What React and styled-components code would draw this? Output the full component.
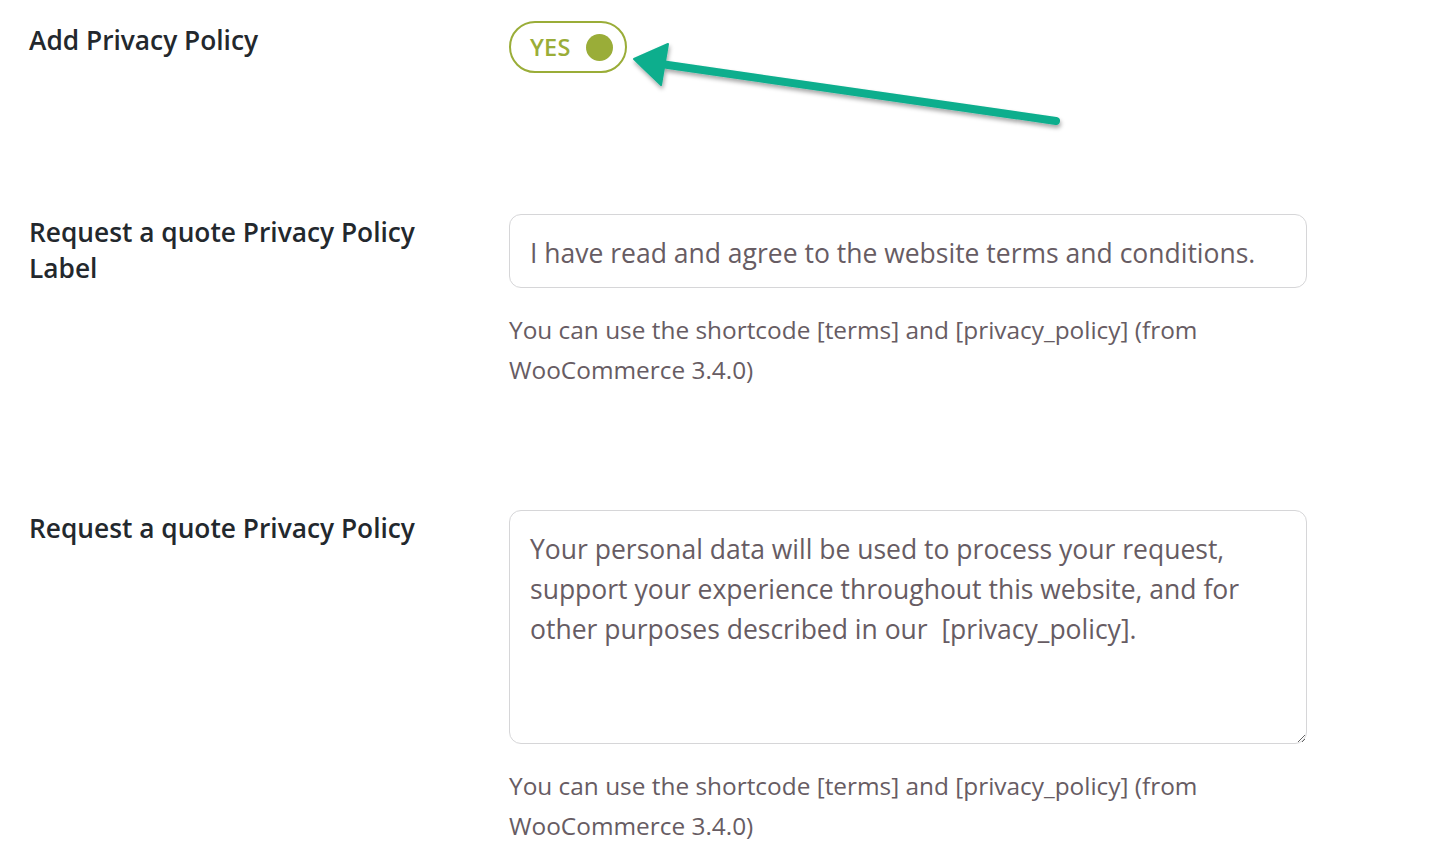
import React from 'react';
import styled, { createGlobalStyle } from 'styled-components';

const GlobalStyle = createGlobalStyle`
  html, body {
    margin: 0;
    padding: 0;
    background: #ffffff;
  }
  body {
    font-family: "Open Sans", "Noto Sans", "Liberation Sans", sans-serif;
  }
`;

const Page = styled.div`
  padding: 21px 0 0 29px;
  width: 1409px;
  box-sizing: border-box;
`;

const Row = styled.div`
  display: grid;
  grid-template-columns: 480px 798px;
  align-items: start;
  margin-bottom: ${(p) => p.$gap || 0}px;
`;

const Label = styled.div`
  font-size: 26.3px;
  font-weight: 600;
  line-height: 36px;
  color: #23282d;
  margin-top: ${(p) => p.$offset || 0}px;
  max-width: 420px;
`;

const Field = styled.div`
  position: relative;
  display: flex;
  flex-direction: column;
  min-height: ${(p) => p.$minHeight || 0}px;
`;

const Toggle = styled.button`
  display: flex;
  align-items: center;
  gap: 15px;
  width: 118px;
  height: 52px;
  box-sizing: border-box;
  padding: 0 12px 0 19px;
  border: 2px solid #9aad38;
  border-radius: 26px;
  background: #ffffff;
  cursor: pointer;
  font-family: inherit;
`;

const ToggleText = styled.span`
  font-size: 23.5px;
  font-weight: 600;
  color: #9aad38;
  letter-spacing: 0.2px;
`;

const Knob = styled.span`
  width: 27px;
  height: 27px;
  border-radius: 50%;
  background: #9aad38;
`;

const Arrow = styled.svg`
  position: absolute;
  left: 110px;
  top: 20px;
  pointer-events: none;
  overflow: visible;
`;

const TextInput = styled.input`
  width: 798px;
  height: 74px;
  box-sizing: border-box;
  padding: 3px 20px 0;
  border: 1px solid #d6d6d8;
  border-radius: 12px;
  font-family: inherit;
  font-size: 26.5px;
  color: #675c63;
  background: #ffffff;
  outline: none;
`;

const TextArea = styled.textarea`
  width: 798px;
  height: 234px;
  box-sizing: border-box;
  padding: 18px 20px;
  border: 1px solid #d6d6d8;
  border-radius: 12px;
  font-family: inherit;
  font-size: 26.5px;
  line-height: 40px;
  color: #675c63;
  background: #ffffff;
  outline: none;
`;

const Description = styled.p`
  margin: 22px 0 0;
  font-size: 24.4px;
  line-height: 40px;
  color: #675c63;
  max-width: 790px;
`;

const HELP = 'You can use the shortcode [terms] and [privacy_policy] (from WooCommerce 3.4.0)';

const App = () => (
  <Page>
    <GlobalStyle />
    <Row $gap={141}>
      <Label $offset={1}>Add Privacy Policy</Label>
      <Field $minHeight={52}>
        <Toggle type="button">
          <ToggleText>YES</ToggleText>
          <Knob />
        </Toggle>
        <Arrow width="460" height="120" viewBox="0 0 460 120">
          <defs>
            <filter id="arrowShadow" x="-10%" y="-50%" width="120%" height="200%">
              <feDropShadow dx="1" dy="3" stdDeviation="2" floodColor="#000" floodOpacity="0.35" />
            </filter>
          </defs>
          <g filter="url(#arrowShadow)" fill="#0aae8d" stroke="#0aae8d">
            <line x1="42" y1="23" x2="437" y2="80" strokeWidth="8" strokeLinecap="round" />
            <polygon points="15,18 49,3 42,44" strokeWidth="2" strokeLinejoin="round" />
          </g>
        </Arrow>
      </Field>
    </Row>
    <Row $gap={120}>
      <Label>Request a quote Privacy Policy Label</Label>
      <Field>
        <TextInput defaultValue="I have read and agree to the website terms and conditions." />
        <Description>{HELP}</Description>
      </Field>
    </Row>
    <Row>
      <Label>Request a quote Privacy Policy</Label>
      <Field>
        <TextArea
          defaultValue={'Your personal data will be used to process your request, support your experience throughout this website, and for other purposes described in our  [privacy_policy].'}
        />
        <Description>{HELP}</Description>
      </Field>
    </Row>
  </Page>
);

export default App;
